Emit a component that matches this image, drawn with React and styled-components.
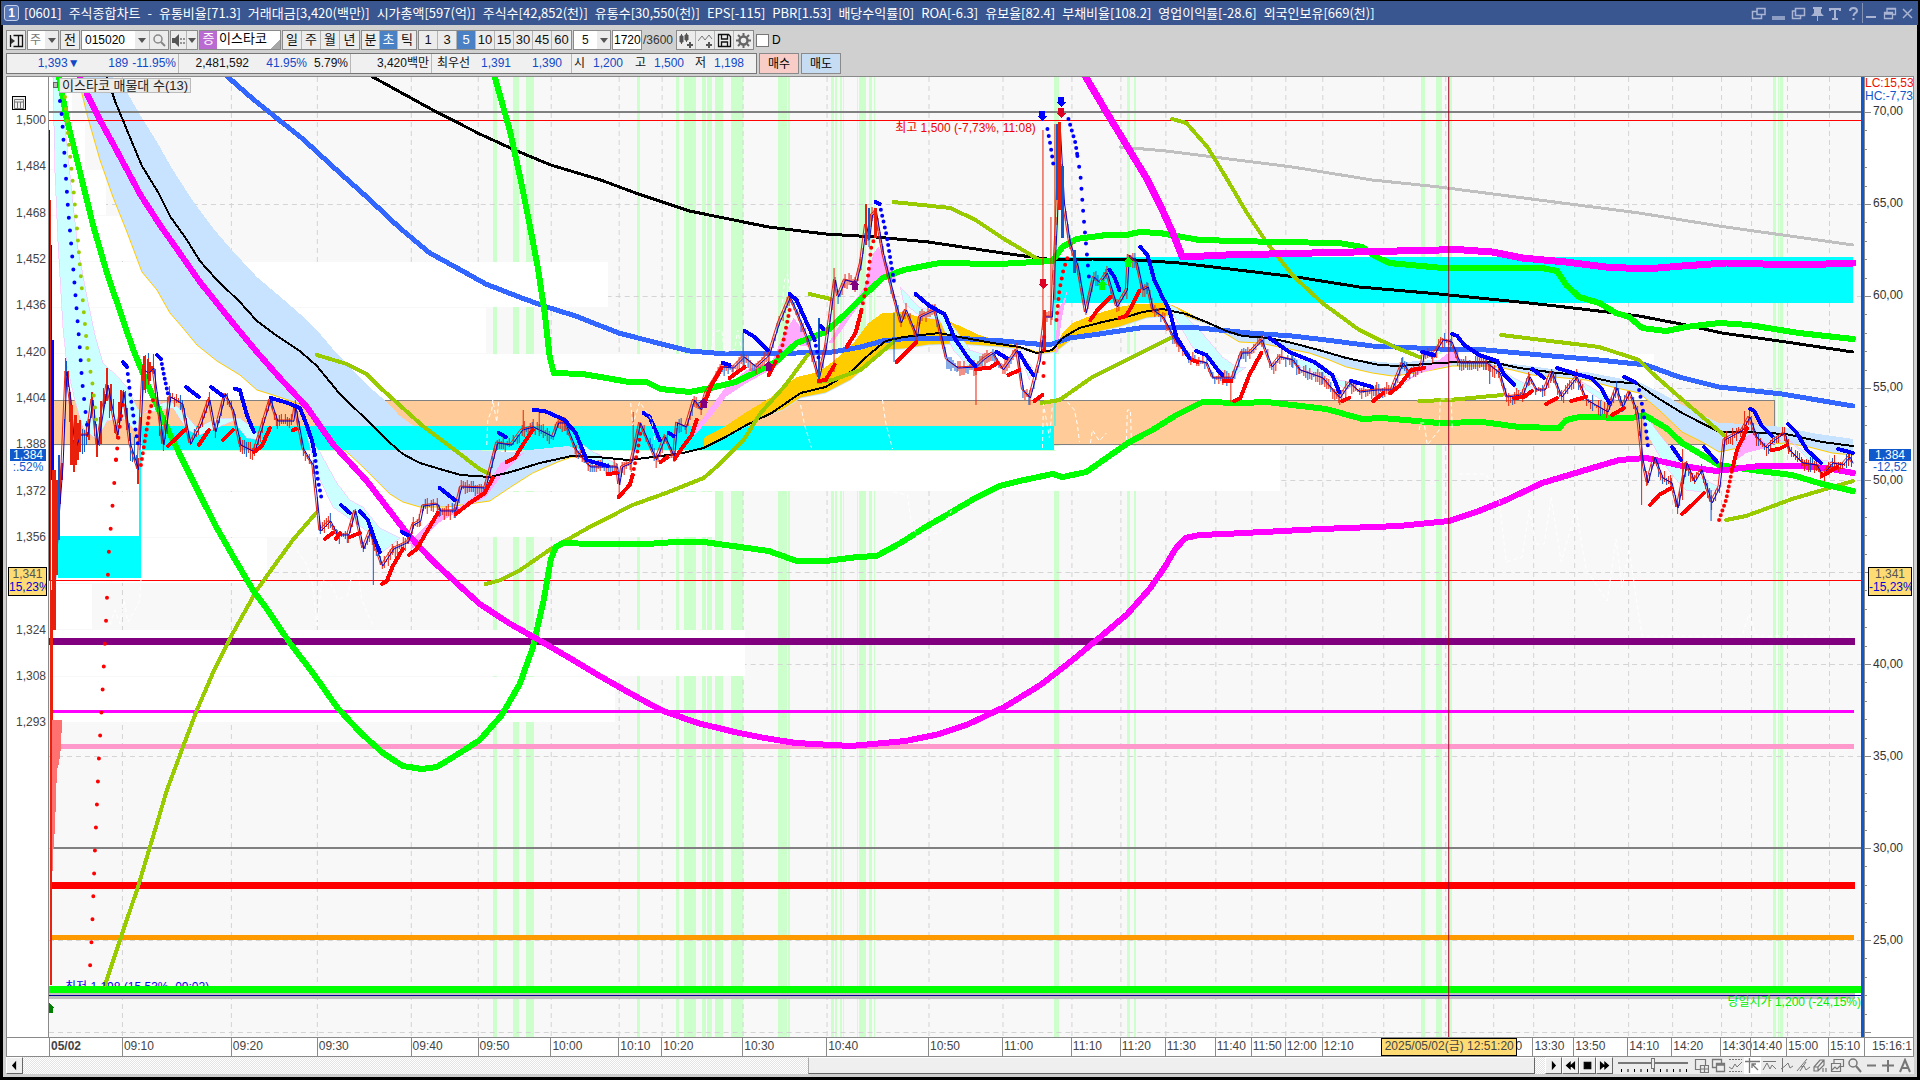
import { useState } from 'react';
import styled, { createGlobalStyle } from 'styled-components';

const GlobalStyle = createGlobalStyle`
  * {
    box-sizing: border-box;
  }
  body {
    margin: 0;
    background: #000;
    font-family: 'Liberation Sans', 'Noto Sans CJK KR', sans-serif;
    font-size: 12px;
    line-height: 16px;
    color: #000;
  }
  button, input, select {
    font: inherit;
    color: inherit;
    margin: 0;
    padding: 0;
    border-radius: 0;
  }
`;

const Frame = styled.div`
  display: flex;
  flex-direction: column;
  min-height: 100vh;
  padding: 1px 2px 3px 1px;
  white-space: nowrap;
`;

const TitleBar = styled.header`
  display: flex;
  align-items: center;
  height: 24px;
  padding: 0 2px 0 3px;
  background: #3a5690;
  color: #fff;
`;

const TitleBadge = styled.span`
  width: 15px;
  height: 16px;
  border: 1px solid #c5d0ea;
  border-radius: 3px;
  background: #5a78b8;
  font-weight: 700;
  line-height: 14px;
  text-align: center;
`;

const Title = styled.h1`
  display: flex;
  flex: 1;
  gap: 7px;
  margin: 0 0 0 5px;
  font-family: 'Noto Sans CJK KR', sans-serif;
  font-size: 13px;
  font-weight: 400;
  line-height: 20px;
`;

const WindowButton = styled.button`
  display: flex;
  align-items: center;
  justify-content: center;
  width: ${(props) => props.$width || 18}px;
  height: 20px;
  border: 0;
  border-left: ${(props) => (props.$divided ? '1px solid #8292b4' : '0')};
  background: none;
  color: #a9b5d3;
`;

const Body = styled.main`
  display: flex;
  flex: 1;
  flex-direction: column;
  margin: 0 1px 0 2px;
  padding: 5px 3px 3px 3px;
  background: #d0d0d0;
`;

const Toolbar = styled.div`
  display: flex;
  height: 20px;
  gap: 1px;
`;

const Group = styled.div`
  display: flex;
  border: 1px solid #8a8a8a;
  background: ${(props) => (props.$white ? '#fff' : '#ececec')};
`;

const ToolButton = styled.button`
  display: flex;
  align-items: center;
  justify-content: center;
  width: ${(props) => props.$width || 19}px;
  border: 0;
  border-right: 1px solid #b4b4b4;
  background: ${(props) => (props.$active ? '#4a80c4' : '#ececec')};
  color: ${(props) => (props.$active ? '#fff' : '#111')};
  font-size: 13px;
  &:last-child {
    border-right: 0;
  }
`;

const ToolInput = styled.input`
  width: ${(props) => props.$width}px;
  border: 0;
  padding-left: ${(props) => props.$indent}px;
  background: #fff;
  outline: none;
`;

const ToolSelect = styled.select`
  width: ${(props) => props.$width}px;
  border: 0;
  padding: 0 0 0 ${(props) => props.$indent || 2}px;
  appearance: none;
  background: #fff;
  color: ${(props) => props.$color || '#111'};
  outline: none;
`;

const MarketBadge = styled.span`
  width: 17px;
  background: #b96bd2;
  color: #fff;
  font-size: 13px;
  text-align: center;
`;

const StockName = styled.span`
  width: 63px;
  padding-left: 2px;
  background: linear-gradient(135deg, #fff 88%, #a8a8a8 88%);
  font-size: 13px;
`;

const CountTotal = styled.span`
  width: 32px;
  line-height: 20px;
  color: #333;
`;

const CheckLabel = styled.label`
  display: flex;
  align-items: center;
  gap: 3px;
  padding-left: 1px;
`;

const CheckBox = styled.input`
  width: 13px;
  height: 13px;
  appearance: none;
  border: 1px solid #777;
  background: #fff;
`;

const QuoteRow = styled.div`
  display: flex;
  gap: 2px;
  height: 21px;
  margin: 3px 0 2px;
`;

const QuoteBox = styled.div`
  display: flex;
  width: 751px;
  border: 1px solid #777;
  background: #f0f0f0;
  line-height: 19px;
`;

const QuoteCell = styled.div`
  display: flex;
  width: ${(props) => props.$width}px;
  padding-right: 2px;
  border-right: 1px solid #b8b8b8;
  &:last-child {
    border-right: 0;
  }
`;

const Quote = styled.span`
  width: ${(props) => props.$width}px;
  color: ${(props) => (props.$blue ? '#1148c8' : '#111')};
  text-align: right;
`;

const OrderButton = styled.button`
  width: 40px;
  border: 1px solid #8a8a8a;
  background: ${(props) => props.$color};
`;

const ChartPanel = styled.section`
  display: flex;
  flex: 1;
  min-height: 600px;
  border: 1px solid #8a8a8a;
  background: #fff;
`;

const PriceAxis = styled.div`
  position: relative;
  display: flex;
  flex-direction: column;
  width: 42px;
  border-right: 1px solid #8a8a8a;
  padding-top: 20px;
  color: #444;
  overflow: hidden;
`;

const PriceList = styled.div`
  display: flex;
  flex-direction: column;
  flex: 0 0 69%;
`;

const PriceLabel = styled.span`
  display: flex;
  flex: 1;
  align-items: center;
  justify-content: flex-end;
  padding-right: 2px;
  line-height: 12px;
`;

const GridButton = styled.button`
  position: absolute;
  left: 5px;
  top: 19px;
  width: 14px;
  height: 14px;
  border: 1px solid #000;
  background: #eee;
`;

const Plot = styled.div`
  position: relative;
  flex: 1;
  min-width: 0;
  border-right: 3px solid #1059cc;
  background: #f8f8f8;
  overflow: hidden;
`;

const PlotSvg = styled.svg`
  position: absolute;
  width: 100%;
  height: 100%;
  shape-rendering: crispEdges;
`;

const Curve = styled.polyline`
  fill: none;
  stroke: ${(props) => props.$color};
  stroke-width: ${(props) => props.$width};
  stroke-linecap: round;
  stroke-linejoin: round;
`;

const Dots = styled(Curve)`
  stroke-dasharray: 0 ${(props) => props.$gap};
  shape-rendering: auto;
`;

const ChartCaption = styled.div`
  position: absolute;
  left: 10px;
  top: 1px;
  padding: 0 2px;
  border: 1px solid #bbb;
  background: #ececec;
  color: #222;
  font-size: 13px;
  line-height: 13px;
`;

const Handle = styled.span`
  position: absolute;
  left: 4px;
  top: 5px;
  width: 5px;
  height: 6px;
  border: 1px solid #666;
  background: #bbb;
`;

const Note = styled.span`
  position: absolute;
  left: ${(props) => props.$left};
  right: ${(props) => props.$right};
  top: ${(props) => props.$top};
  height: ${(props) => props.$height || 'auto'};
  color: ${(props) => props.$color};
  line-height: 16px;
  overflow: hidden;
`;

const RateAxis = styled.div`
  position: relative;
  display: flex;
  flex-direction: column;
  width: 49px;
  border-left: 1px solid #8a8a8a;
  overflow: hidden;
`;

const RateHead = styled.div`
  color: ${(props) => props.$color};
  line-height: 13px;
`;

const RateList = styled.div`
  display: flex;
  flex: 0 0 96%;
  flex-direction: column;
`;

const RateLabel = styled.span`
  flex: 1;
  padding-left: 8px;
  color: #333;
  line-height: 16px;
`;

const RateTicks = styled.svg`
  position: absolute;
  left: 0;
  top: 0;
  width: 7px;
  height: 100%;
  shape-rendering: crispEdges;
`;

const PriceTag = styled.div`
  position: absolute;
  left: ${(props) => props.$left}px;
  right: 2px;
  top: 38.8%;
  color: #1059cc;
  line-height: 12px;
  text-align: center;
  overflow: hidden;
`;

const TagValue = styled.div`
  background: #1059cc;
  color: #fff;
`;

const CursorTag = styled.div`
  position: absolute;
  left: ${(props) => props.$left}px;
  right: 1px;
  top: 51%;
  height: 29px;
  border: 1px solid #000;
  background: #ffdc73;
  color: #555;
  line-height: 13px;
  text-align: center;
  overflow: hidden;
`;

const CursorRate = styled.div`
  color: #0000dd;
`;

const TimeAxis = styled.div`
  position: relative;
  display: flex;
  height: 19px;
  padding-left: 42px;
  border: 1px solid #8a8a8a;
  border-top: 0;
  background: #fff;
  color: #444;
  line-height: 16px;
`;

const TimeCells = styled.div`
  display: flex;
  flex: 1;
`;

const TimeCell = styled.span`
  flex: ${(props) => props.$span} 0 0;
  width: 0;
  box-shadow: inset 1px 0 #8a8a8a;
  font-weight: ${(props) => (props.$bold ? 700 : 400)};
  text-indent: 2px;
`;

const LastTime = styled.span`
  width: 49px;
  padding-left: 7px;
  border-left: 1px solid #8a8a8a;
  overflow: hidden;
`;

const TimeCursor = styled.span`
  position: absolute;
  left: 72.1%;
  top: 0;
  width: 136px;
  height: 18px;
  border: 1px solid #000;
  background: #ffdc73;
  line-height: 15px;
  text-align: center;
`;

const Footer = styled.footer`
  display: flex;
  height: 17px;
  background: #ececec;
`;

const ScrollButton = styled.button`
  width: 17px;
  display: flex;
  align-items: center;
  justify-content: center;
  border: 1px solid;
  border-color: #fff #666 #666 #fff;
  background: #efefef;
`;

const ScrollTrack = styled.div`
  display: flex;
  flex: 1;
  padding-right: 10px;
  background: repeating-conic-gradient(#e4e4e4 0 25%, #fff 0 50%) 0 0 / 2px 2px;
`;

const ScrollSpace = styled.div`
  flex: 787;
`;

const ScrollThumb = styled.div`
  flex: 726;
  border: 1px solid;
  border-color: #fff #666 #666 #aaa;
  background: #efefef;
`;

const SpeedBox = styled.div`
  width: 80px;
  padding: 1px 3px 0 5px;
`;

const SpeedSlider = styled.input`
  display: block;
  width: 70px;
  height: 11px;
  appearance: none;
  background: linear-gradient(#777, #777) 0 4px / 100% 2px no-repeat;
  &::-webkit-slider-thumb {
    appearance: none;
    width: 4px;
    height: 11px;
    border: 1px solid #777;
    background: #eee;
  }
`;

const SpeedTicks = styled.svg`
  display: block;
  width: 70px;
  height: 3px;
`;

const ChartTool = styled.button`
  display: flex;
  align-items: center;
  justify-content: center;
  width: 17px;
  border: 0;
  background: ${(props) => (props.$active ? '#fff' : 'none')};
  color: #777;
`;

const titleItems = [
  '[0601]', '주식종합차트', '-', '유통비율[71.3]', '거래대금[3,420(백만)]', '시가총액[597(억)]',
  '주식수[42,852(천)]', '유통수[30,550(천)]', 'EPS[-115]', 'PBR[1.53]', '배당수익률[0]', 'ROA[-6.3]',
  '유보율[82.4]', '부채비율[108.2]', '영업이익률[-28.6]', '외국인보유[669(천)]',
];

const windowIcons = [
  { name: '분리', d: 'M6 2.500h8v6h-8zM6 5.500H1.500v7h9V9' },
  { name: '아래로', d: 'M1 11h13M1 13h13' },
  { name: '복제', d: 'M4.500 2.500h9v7h-9zM4.500 5H1.500v7.500h8V10' },
];

const periods = ['일', '주', '월', '년'];
const units = ['분', '초', '틱'];
const steps = ['1', '3', '5', '10', '15', '30', '45', '60'];

const prices = [
  '1,500', '1,484', '1,468', '1,452', '1,436', '1,420', '1,404',
  '1,388', '1,372', '1,356', '', '1,324', '1,308', '1,293',
];

const rates = ['70,00', '65,00', '60,00', '55,00', '50,00', '', '40,00', '35,00', '30,00', '25,00'];

const times = [
  [49, '05/02'], [122, '09:10'], [231, '09:20'], [317, '09:30'], [411, '09:40'], [478, '09:50'],
  [551, '10:00'], [619, '10:10'], [662, '10:20'], [743, '10:30'], [827, '10:40'], [929, '10:50'],
  [1003, '11:00'], [1072, '11:10'], [1121, '11:20'], [1166, '11:30'], [1216, '11:40'],
  [1252, '11:50'], [1286, '12:00'], [1323, '12:10'], [1384, ''], [1446, ''], [1494, ''], [1515, '0'],
  [1534, '13:30'], [1575, '13:50'], [1629, '14:10'], [1673, '14:20'], [1722, '14:30'],
  [1752, '14:40'], [1788, '15:00'], [1830, '15:10'],
];

const timeLines = times.filter(([x, label]) => x > 49 && label !== '0');

const rateLines = [204, 296, 388, 480, 572, 664, 756, 848, 940, 1032];

// [x, width]
const strips = [
  [493, 4], [513, 6], [526, 8], [637, 3], [676, 3], [684, 12], [702, 4], [707, 5], [715, 8],
  [731, 12], [778, 9], [788, 2], [831, 3], [835, 2], [840, 2], [843, 1], [857, 1], [859, 7],
  [869, 3], [874, 1], [1055, 5], [1128, 3], [1135, 2], [1422, 4], [1437, 6], [1450, 3],
  [1774, 3], [1779, 1], [1781, 3],
];

// [top, height, right edge] of each price band
const volumeBands = [
  [77, 45, 72], [123, 46, 85], [170, 45, 106], [216, 45, 140], [262, 45, 608], [308, 45, 486],
  [354, 46, 1655], [446, 45, 1281], [492, 45, 715], [538, 45, 267], [584, 45, 92],
  [630, 46, 745], [677, 45, 615],
];

const levels = [
  { y: 112, width: 2, color: '#808080', from: 49, to: 1862 },
  { y: 641.5, width: 7, color: '#800080', from: 49, to: 1856 },
  { y: 711.5, width: 3, color: '#ff00ff', from: 52, to: 1855 },
  { y: 746.5, width: 5, color: '#ff99cc', from: 61, to: 1855 },
  { y: 848, width: 2, color: '#808080', from: 54, to: 1862 },
  { y: 885.5, width: 7, color: '#ff0000', from: 52, to: 1856 },
  { y: 937.5, width: 5, color: '#ff9900', from: 52, to: 1855 },
  { y: 996, width: 6, color: '#c0c0c0', from: 49, to: 1856 },
  { y: 989.5, width: 7, color: '#00ff00', from: 49, to: 1862 },
  { y: 995.5, width: 1, color: '#000090', from: 49, to: 1862 },
];

const blueClouds = [
  {
    top: '113,77 128,94 142,118 157,142 173,170 193,201 213,228 231,249 257,277 283,299 307,320 317,330 333,349 353,370 373,390 387,402 400,416 417,428 433,438 453,445 473,450 511,452 568,446 600,454',
    bottom: '80,77 82,94 88,118 100,160 113,197 127,232 142,272 157,290 170,313 183,328 197,345 217,361 240,375 257,390 273,395 300,404 310,414 320,428 333,442 347,452 362,466 377,481 390,494 403,502 420,507 447,507 490,501 511,487 533,473 558,462 572,457 600,457',
  },
  {
    top: '1220,328 1247,335 1270,337 1293,342 1313,347 1333,353 1360,360 1393,363 1420,361 1450,359 1493,362 1523,365 1553,369 1587,372 1613,377 1640,382 1660,392 1683,405 1700,413 1720,423 1750,424 1783,427 1813,433 1854,439',
    bottom: '1220,330 1240,342 1260,343 1280,347 1310,353 1330,360 1347,367 1373,373 1393,376 1410,374 1433,370 1453,366 1493,366 1513,370 1533,375 1587,380 1613,387 1640,393 1660,410 1683,432 1703,442 1720,452 1753,445 1787,443 1810,447 1833,453 1854,455',
  },
];

const goldClouds = [
  {
    top: '704,438 726,426 747,412 772,397 797,377 819,372 833,362 854,343 869,323 883,313 904,312 919,317 940,317 958,325 980,335 1003,342 1027,348 1043,353 1056,348 1063,333 1073,323 1093,315 1120,307 1137,304 1167,303 1180,308 1200,318 1217,327',
    bottom: '704,448 736,432 761,418 783,410 801,398 826,393 851,380 869,365 886,350 904,349 929,345 958,344 1000,347 1027,350 1043,354 1056,352 1073,339 1093,333 1120,327 1147,318 1167,316 1187,317 1217,327',
  },
];

const paleClouds = [
  '56,77 62,94 67,146 72,194 78,249 87,297 95,335 103,363 117,376 127,387 137,407 142,415 137,432 123,418 107,421 97,440 83,428 75,401 67,366 63,328 58,242 55,173 53,77',
  '143,413 157,405 170,401 183,411 197,428 217,418 240,418 253,428 262,440 247,438 233,421 200,435 187,430 173,408',
  '307,435 320,452 337,483 350,500 363,507 380,528 400,538 383,552 367,531 333,507 317,473',
  '578,440 590,450 605,458 618,464 610,468 590,462',
  '901,287 919,307 940,313 954,327 976,357 986,363 969,367 954,350 940,320 922,317 904,303',
  '960,347 980,353 997,353 983,367 967,360',
  '1020,353 1033,367 1030,380',
  '1167,303 1180,310 1200,330 1223,357 1237,367 1247,367 1233,377 1217,367 1193,347 1173,313',
  '1283,357 1320,363 1340,380 1357,383 1347,390 1330,377 1307,370',
  '1500,367 1513,377 1533,387 1533,393 1517,390',
  '1583,382 1600,392 1617,400 1607,403 1587,390',
  '1642,407 1657,430 1673,450 1683,467 1700,477 1720,487 1710,493 1687,490 1680,483 1667,467 1647,433',
  '1790,440 1807,453 1823,460 1840,463 1827,467 1810,460',
];

const pinkClouds = [
  '410,542 440,511 460,507 480,492 486,488 501,463 526,452 522,455 504,473 486,497 461,510 440,522 413,549',
  '686,443 697,427 711,407 726,387 747,370 772,362 783,337 794,318 801,327 811,347 797,345 776,367 747,383 726,397 711,417 697,433',
  '829,343 851,307 865,287 874,253 879,247 890,267 897,280 883,277 869,293 851,317 833,343',
  '1056,353 1058,310 1063,303 1068,290 1062,320 1058,353',
  '1400,387 1420,370 1440,360 1453,350 1462,360 1443,367 1420,373',
  '1733,463 1743,440 1753,433 1767,443 1783,440 1767,448 1747,453',
];

const longCurves = [
  {
    color: '#c0c0c0',
    width: 3,
    points: '1121,147 1167,151 1293,167 1373,180 1440,187 1540,200 1640,213 1720,226 1854,245',
  },
  {
    color: '#3366ff',
    width: 5,
    points: '228,77 253,99 283,123 303,139 340,173 367,197 400,228 430,253 461,270 486,284 522,298 547,307 576,316 619,333 654,342 690,351 726,354 797,353 833,352 861,347 883,341 911,338 954,338 1003,341 1037,344 1053,344 1070,338 1100,334 1140,328 1167,327 1200,328 1250,333 1293,336 1327,340 1373,346 1440,349 1487,350 1553,356 1600,360 1647,365 1680,377 1720,387 1783,394 1854,406',
  },
  {
    color: '#000',
    width: 3,
    points: '373,77 433,110 480,134 515,150 551,165 601,180 636,193 690,211 744,222 769,227 826,234 876,237 929,242 1003,253 1047,259 1093,259 1137,260 1180,263 1247,271 1297,277 1360,287 1440,294 1530,303 1583,309 1640,316 1687,325 1723,333 1787,342 1854,352',
  },
  {
    color: '#000',
    width: 2,
    points: '107,77 115,101 127,130 142,166 158,192 170,216 187,240 200,261 217,280 240,302 257,321 273,333 300,351 317,366 340,394 367,420 387,440 403,454 420,463 440,469 461,475 490,477 511,472 540,463 572,456 597,457 629,460 654,457 683,453 704,448 726,437 747,425 772,413 801,393 826,387 851,372 869,355 886,341 904,337 940,333 960,337 993,343 1020,347 1037,353 1053,350 1063,338 1080,328 1103,322 1127,317 1143,312 1163,309 1187,314 1207,322 1227,331 1243,336 1270,338 1293,343 1323,351 1347,358 1380,365 1400,366 1440,363 1460,362 1493,362 1520,368 1550,372 1587,376 1613,382 1637,383 1657,397 1683,413 1720,432 1747,432 1787,434 1823,442 1854,446',
  },
  { color: '#99cc00', width: 4, points: '317,355 347,364 367,374 383,390 423,426 480,469 488,473' },
  {
    color: '#99cc00',
    width: 4,
    points: '105,985 120,940 137,890 150,847 167,790 183,747 197,710 213,673 233,633 257,590 277,562 293,540 317,512',
  },
  {
    color: '#99cc00',
    width: 4,
    points: '486,584 501,580 519,571 551,549 590,527 633,505 669,492 704,478 719,465 744,440 761,413 786,385 808,355',
  },
  { color: '#99cc00', width: 4, points: '810,294 831,299' },
  { color: '#99cc00', width: 4, points: '819,382 833,380 861,370 894,342' },
  { color: '#99cc00', width: 4, points: '894,202 951,208 976,220 1003,238 1040,260 1052,260' },
  { color: '#99cc00', width: 4, points: '1042,403 1060,400 1093,377 1127,360 1175,336' },
  {
    color: '#99cc00',
    width: 4,
    points: '1173,119 1187,123 1208,147 1227,178 1247,212 1267,242 1293,275 1323,303 1360,330 1393,346 1420,357',
  },
  { color: '#99cc00', width: 4, points: '1420,401 1450,400 1503,395' },
  { color: '#99cc00', width: 4, points: '1502,335 1600,347 1640,360 1653,373 1687,403 1727,437' },
  { color: '#99cc00', width: 4, points: '1727,520 1747,516 1793,499 1854,481' },
  {
    color: '#00ff00',
    width: 6,
    points: '59,77 67,120 82,180 93,225 107,273 120,311 133,349 147,383 167,428 187,469 200,495 217,528 233,556 253,590 267,609 290,643 313,673 337,707 360,732 383,753 403,766 422,769 437,767 460,753 480,740 502,715 520,684 533,648 544,600 551,560 556,547 563,543 594,544 647,544 676,542 704,542 726,545 769,551 797,561 826,561 858,557 877,556 901,543 926,527 947,515 976,498 1000,486 1020,481 1053,474 1063,477 1087,472 1107,458 1130,442 1153,430 1177,415 1203,402 1243,403 1267,402 1293,405 1327,409 1363,419 1383,418 1440,423 1483,422 1520,427 1560,428 1567,420 1580,417 1633,418 1645,415 1667,428 1683,443 1703,455 1720,465 1760,471 1793,475 1823,484 1854,491',
  },
  {
    color: '#00ff00',
    width: 6,
    points: '495,77 510,130 521,180 529,220 538,267 545,313 550,357 554,373 583,374 601,377 629,382 647,382 661,389 690,392 711,388 736,382 761,370 776,362 797,343 826,332 847,313 865,295 883,278 904,270 940,263 1000,264 1053,261 1063,247 1077,239 1107,235 1127,235 1140,232 1160,233 1200,240 1277,242 1340,243 1363,247 1377,257 1390,263 1443,268 1543,268 1558,271 1567,285 1580,297 1600,303 1617,313 1630,317 1643,328 1667,331 1687,327 1720,323 1750,325 1800,333 1854,339',
  },
  {
    color: '#ff00ff',
    width: 6,
    points: '80,77 87,94 100,120 117,151 140,194 160,225 177,249 200,282 233,323 257,352 280,378 307,407 333,444 367,481 407,533 433,561 460,586 480,604 509,623 539,640 570,658 600,676 630,693 661,710 698,723 735,732 765,738 796,743 851,746 906,741 940,734 967,725 1005,707 1041,685 1072,661 1102,636 1128,614 1151,588 1166,566 1176,549 1186,538 1200,535 1225,534 1322,529 1400,526 1450,521 1477,512 1507,500 1543,483 1583,471 1620,460 1647,458 1683,466 1717,471 1760,466 1800,466 1827,468 1854,473',
  },
  {
    color: '#ff00ff',
    width: 7,
    points: '1084,73 1107,112 1127,145 1147,178 1163,210 1173,232 1183,257 1227,255 1313,253 1440,250 1450,249 1493,252 1523,258 1567,262 1607,267 1647,269 1683,266 1727,263 1800,265 1854,263',
  },
];

const blueTrails = [
  '123,362 127,367', '157,355 161,359', '186,387 199,397', '211,387 223,396', '235,389 240,390 247,415 254,432',
  '271,398 288,403 300,408 305,420 312,440 315,455', '341,505 350,513',
  '360,511 368,520 375,540 380,552', '402,532 408,535', '440,488 455,500', '499,433 506,437',
  '534,410 545,411 565,420 576,433 587,460', '590,461 608,466', '644,413 650,417 660,440',
  '669,433 674,436', '723,363 730,365', '745,331 755,337 768,350', '790,294 797,300 805,318 815,340',
  '821,326 824,329', '876,202 880,204', '916,294 930,306 945,314 955,338 970,360 976,366', '997,352 1007,358',
  '1020,353 1027,365 1034,375', '1110,270 1115,277 1120,290',
  '1141,247 1148,255 1155,280 1163,297 1170,310 1177,337 1190,358',
  '1197,351 1207,355 1220,372 1223,375', '1270,338 1290,352 1315,362 1333,375 1340,392',
  '1352,381 1373,387', '1423,352 1435,355', '1453,334 1458,336 1465,345 1480,355 1498,361 1505,375 1515,385',
  '1533,369 1545,378', '1558,368 1577,374 1592,378 1602,388 1610,403', '1625,377 1637,383',
  '1673,447 1682,460', '1705,447 1718,462', '1751,409 1755,411 1762,425 1773,436',
  '1789,424 1797,432 1808,450 1822,463', '1839,449 1854,453',
];

const redTrails = [
  '168,446 186,429', '199,445 209,430', '223,440 233,430', '254,452 262,446 270,428', '293,430 296,429',
  '325,539 333,533', '336,539 340,533', '350,537 360,533', '382,584 387,581 393,566 403,549',
  '409,555 417,549 428,530 438,513', '456,514 470,503 485,493 493,478', '507,462 515,458 523,445 533,430',
  '608,474 617,473', '619,497 630,485 633,475', '661,462 668,457', '675,459 683,447 692,435 697,420',
  '704,405 712,385 722,368', '730,378 745,367', '769,375 776,362', '819,381 826,380 835,365', '847,347 856,333 862,310',
  '897,362 905,354 917,342', '976,369 990,368 998,363', '1009,375 1020,370', '1035,401 1043,395',
  '1091,320 1098,310 1111,297', '1120,318 1127,316 1140,291', '1193,360 1198,362', '1224,381 1232,381',
  '1235,401 1241,398 1250,375 1262,353', '1343,401 1350,398', '1374,401 1384,393',
  '1391,393 1400,386 1412,370 1425,368', '1515,398 1525,397 1533,391', '1547,404 1558,398',
  '1572,401 1587,397', '1613,415 1625,408', '1651,505 1660,495 1672,488', '1683,514 1695,503 1705,493',
  '1733,470 1738,450 1745,435 1748,428', '1772,450 1780,449 1788,445', '1823,476 1830,472 1838,467',
];

const dotTrails = [
  { color: '#0000ff', gap: 13, points: '60,101 62,117 65,163 68,208 71,242 74,277 77,314 80,350 82,380 87,425' },
  { color: '#99cc00', gap: 12, points: '65,97 68,135 73,184 77,228 80,266 84,314 88,356 93,387 97,428' },
  { color: '#0000ff', gap: 7, points: '127,367 130,392 134,420 139,450' },
  { color: '#ff0000', gap: 11, points: '123,405 119,432 116,460' },
  { color: '#ff0000', gap: 23, points: '116,460 113,500 109,550 106,622 103,683 99,757 95,849 92,933 89,985' },
  { color: '#ff0000', gap: 6, points: '141,465 145,440 150,410 154,397' },
  { color: '#0000ff', gap: 5, points: '161,359 164,375 168,394' },
  { color: '#0000ff', gap: 6, points: '315,455 318,480 322,500' },
  { color: '#ff0000', gap: 6, points: '633,475 638,450 641,432' },
  { color: '#ff0000', gap: 6, points: '776,362 783,345 790,310' },
  { color: '#0000ff', gap: 6, points: '815,340 819,358' },
  { color: '#ff0000', gap: 7, points: '862,310 868,280 872,245 876,237' },
  { color: '#0000ff', gap: 6, points: '880,204 887,235 895,285' },
  { color: '#0000ff', gap: 7, points: '1048,129 1051,145 1054,165' },
  { color: '#ff0000', gap: 13, points: '1044,376 1045,325' },
  { color: '#ff0000', gap: 7, points: '1057,320 1060,290 1064,270 1068,258' },
  { color: '#0000ff', gap: 6, points: '1069,119 1076,143 1078,156' },
  { color: '#0000ff', gap: 11, points: '1078,156 1081,175 1084,215 1088,260 1090,283' },
  { color: '#0000ff', gap: 7, points: '1640,390 1643,405 1647,430 1649,448' },
  { color: '#ff0000', gap: 5, points: '1720,520 1727,500 1733,470' },
];

const whiteTraces = [
  '297,550 307,565 313,585 317,625 322,580 332,585 338,600 348,595 353,570 358,572 362,600 367,612 373,625',
  '110,625 115,610 120,624 124,600 128,622 135,610 140,600 141,580',
  '487,445 488,420 492,410 493,400 497,422 499,400', '631,403 633,425 640,402 652,420 655,440',
  '712,350 714,332 722,330 725,352 735,350 738,330 742,350', '782,310 785,280 788,274 790,290',
  '801,405 805,425 812,448', '883,400 886,422 893,449', '894,492 908,495 912,525 920,540 930,535 940,532 948,520 952,510',
  '1043,448 1044,404 1050,438 1053,405', '1068,402 1075,410 1078,425 1080,442', '1091,443 1093,430 1100,441 1107,433',
  '1127,440 1128,410 1131,410 1132,440', '1420,430 1421,423 1425,423 1428,445 1440,430 1441,399 1452,399 1453,430',
];

const pricePath = [
  [54, 590], [58, 518], [62, 466], [66, 372], [70, 400], [74, 450], [80, 435], [87, 435], [92, 400],
  [97, 445], [107, 385], [117, 435], [123, 392], [130, 445], [138, 470], [143, 370], [148, 373],
  [153, 368], [163, 445], [170, 397], [182, 404], [190, 444], [200, 425], [209, 400], [215, 432],
  [225, 394], [233, 411], [240, 445], [254, 452], [270, 400], [277, 421], [293, 421], [295, 407],
  [303, 449], [313, 466], [320, 531], [330, 521], [337, 535], [348, 535], [355, 511], [363, 549],
  [370, 531], [382, 566], [393, 549], [408, 542], [413, 525], [420, 521], [423, 506], [437, 504],
  [440, 511], [455, 511], [461, 487], [485, 488], [490, 470], [497, 443], [511, 445], [522, 430],
  [533, 427], [553, 437], [558, 423], [565, 423], [576, 450], [590, 467], [617, 467], [619, 485],
  [622, 467], [631, 463], [640, 423], [656, 460], [665, 437], [674, 457], [677, 423], [686, 427],
  [694, 400], [701, 410], [706, 393], [722, 367], [733, 368], [744, 357], [756, 367], [769, 355],
  [779, 323], [790, 297], [797, 313], [808, 340], [819, 378], [826, 347], [835, 280], [838, 297],
  [845, 280], [856, 283], [861, 263], [866, 225], [869, 240], [872, 215], [876, 212], [883, 253],
  [894, 297], [901, 323], [906, 310], [917, 337], [920, 317], [935, 310], [947, 360], [958, 368],
  [976, 367], [983, 360], [993, 353], [1003, 370], [1017, 350], [1023, 390], [1030, 398], [1040, 360],
  [1045, 317], [1052, 317], [1057, 220], [1060, 130], [1064, 203], [1070, 243], [1078, 267],
  [1086, 313], [1094, 277], [1100, 283], [1107, 273], [1117, 307], [1127, 290], [1129, 255],
  [1137, 263], [1143, 290], [1148, 287], [1153, 310], [1163, 317], [1177, 343], [1193, 360],
  [1207, 363], [1213, 378], [1233, 378], [1242, 353], [1250, 353], [1262, 340], [1272, 367],
  [1280, 357], [1293, 360], [1300, 370], [1323, 378], [1340, 398], [1350, 383], [1360, 392],
  [1377, 390], [1392, 390], [1403, 363], [1410, 373], [1422, 367], [1424, 354], [1433, 357],
  [1443, 340], [1452, 342], [1460, 363], [1487, 363], [1500, 373], [1507, 397], [1523, 395],
  [1530, 377], [1537, 390], [1545, 390], [1552, 372], [1562, 397], [1577, 377], [1587, 400],
  [1608, 412], [1617, 388], [1623, 407], [1630, 392], [1638, 413], [1643, 460], [1648, 483],
  [1655, 457], [1663, 478], [1672, 483], [1678, 508], [1687, 463], [1695, 482], [1702, 470],
  [1712, 503], [1720, 487], [1725, 440], [1743, 430], [1750, 417], [1757, 437], [1767, 448],
  [1775, 440], [1785, 433], [1790, 450], [1803, 463], [1817, 465], [1823, 475], [1833, 463],
  [1843, 465], [1850, 457], [1853, 463],
];

// [x, top, bottom, color, width]
const spikes = [
  [49.5, 130, 580, '#0000ff', 1], [51, 245, 480, '#0000ff', 2], [50.5, 200, 300, '#e8200c', 1],
  [53, 340, 480, '#0000ff', 2], [50.5, 300, 985, '#e8200c', 1], [54, 470, 630, '#e8200c', 4],
  [51.5, 630, 985, '#e8200c', 1], [52.5, 590, 720, '#e8200c', 2], [59, 455, 540, '#1059cc', 2], [57, 480, 575, '#e8200c', 2],
  [65.5, 358, 400, '#e8200c', 1], [72, 405, 465, '#e8200c', 3], [76, 415, 465, '#e8200c', 3],
  [80, 420, 452, '#e8200c', 2], [144.5, 356, 390, '#e8200c', 2], [148.5, 358, 385, '#e8200c', 1],
  [140.5, 450, 578, '#00ffff', 2], [373.5, 540, 585, '#1059cc', 1], [523.5, 410, 430, '#e8200c', 1],
  [539.5, 410, 432, '#e8200c', 1], [633.5, 412, 460, '#e8200c', 1], [743.5, 333, 362, '#1059cc', 1],
  [834.5, 268, 372, '#e8200c', 1], [819.5, 318, 381, '#1059cc', 2], [866, 204, 245, '#e8200c', 2],
  [869, 208, 240, '#1059cc', 2], [876, 208, 238, '#e8200c', 3], [894.5, 313, 362, '#1059cc', 1],
  [976.5, 365, 405, '#e8200c', 1], [1043.5, 130, 330, '#e8200c', 1], [1045.5, 310, 350, '#e8200c', 3],
  [1051.5, 217, 317, '#e8200c', 1], [1055.5, 124, 300, '#e8200c', 1], [1058, 124, 200, '#1059cc', 2],
  [1060.5, 122, 210, '#e8200c', 3], [1063.5, 166, 238, '#1059cc', 3], [1075, 250, 273, '#1059cc', 3],
  [1231.5, 380, 402, '#e8200c', 1], [1642.5, 410, 505, '#e8200c', 1], [1712, 490, 521, '#1059cc', 1],
  [1683.5, 449, 500, '#e8200c', 1], [1745.5, 411, 440, '#e8200c', 1], [1490.5, 362, 384, '#1059cc', 1],
];

const arrows = [
  { x: 1043, y: 116, color: '#0000ff' },
  { x: 1062, y: 102, color: '#0000ff' },
  { x: 1062, y: 113, color: '#dd0022' },
  { x: 1044, y: 284, color: '#dd0022' },
  { x: 1103, y: 285, color: '#00ff00', up: true },
  { x: 1129, y: 262, color: '#00ff00', up: true },
  { x: 704, y: 403, color: '#800080', up: true },
  { x: 769, y: 366, color: '#800080', up: true },
  { x: 855, y: 285, color: '#800080', up: true },
  { x: 50, y: 1008, color: '#008000', up: true },
];

const makeTicks = () => {
  const result = [];
  let seed = 17;
  const random = () => {
    seed = (seed * 16807) % 2147483647;
    return seed / 2147483647;
  };
  for (let i = 1; i < pricePath.length; i++) {
    const [x0, y0] = pricePath[i - 1];
    const [x1, y1] = pricePath[i];
    for (let x = x0; x < x1; x += 2) {
      const y = y0 + ((y1 - y0) * (x - x0)) / (x1 - x0);
      const range = x < 170 ? 22 : 8;
      const up = Math.round(random() * range);
      const down = Math.round(random() * range);
      const rising = y1 < y0 ? random() > 0.15 : random() > 0.45;
      const width = x < 155 && rising ? 2 : 1;
      result.push({ x: x + 0.5, top: Math.round(y) - up, bottom: Math.round(y) + down + 1, rising, width });
    }
  }
  return result;
};

const ticks = makeTicks();

const shiftPath = (dx, dy) => pricePath.map(([x, y]) => `${x + dx},${y + dy}`).join(' ');

const whiteEcho = pricePath
  .filter(([x]) => x > 1455)
  .map(([x, y]) => `${x},${Math.min(636, Math.max(470, Math.round(y * 2.6 - 470)))}`)
  .join(' ');

const reverse = (points) => points.split(' ').reverse().join(' ');

const Cloud = ({ cloud, fill, edge }) => (
  <>
    <polygon points={`${cloud.top} ${reverse(cloud.bottom)}`} fill={fill} />
    <Curve points={cloud.bottom} $color={edge} $width={1} />
  </>
);

const Arrow = ({ x, y, color, up }) => (
  <path
    d={up ? 'M0-5l5 5h-2v5h-6v-5h-2z' : 'M0 5l5-5h-2v-5h-6v5h-2z'}
    transform={`translate(${x} ${y})`}
    fill={color}
  />
);

const Chart = () => (
  <PlotSvg viewBox="49 77 1813 960" preserveAspectRatio="none" role="img" aria-label="이스타코 초봉 차트">
    {strips.map(([x, width]) => (
      <rect key={x} x={x} y="77" width={width} height="960" fill="#ccffcc" />
    ))}
    <g stroke="#d4d4d4" strokeDasharray="5 4">
      {timeLines.map(([x]) => (
        <line key={x} x1={x + 0.5} x2={x + 0.5} y1="77" y2="1037" />
      ))}
      {rateLines.map((y) => (
        <line key={y} x1="49" x2="1862" y1={y + 0.5} y2={y + 0.5} />
      ))}
    </g>
    {volumeBands.map(([y, height, right]) => (
      <rect key={y} x="49" y={y} width={right - 49} height={height} fill="#fff" />
    ))}
    <rect x="48.5" y="400.5" width="1727" height="44" fill="#ffcc99" stroke="#808080" />
    <path d="M58 536h82v42h-82zM142 426h913v24H142zM1055 257h799v46h-799z" fill="#00ffff" />
    <path d="M1055.500 303v123" stroke="#00ffff" />
    <path d="M142 450.500h914" stroke="#ccffcc" />

    {blueClouds.map((cloud) => (
      <Cloud key={cloud.top} cloud={cloud} fill="#c8e3ff" edge="#ffcc00" />
    ))}
    <rect x="142" y="426" width="330" height="24" fill="#00ffff" />
    {goldClouds.map((cloud) => (
      <Cloud key={cloud.top} cloud={cloud} fill="#ffcc00" edge="#c8e3ff" />
    ))}
    {paleClouds.map((points) => (
      <polygon key={points} points={points} fill="#ccffff" stroke="#ffaaff" strokeWidth="0.5" />
    ))}
    {pinkClouds.map((points) => (
      <polygon key={points} points={points} fill="#ffaaff" />
    ))}
    <polygon points="51,720 62,720 61,747 59,763 57,770 55,827 53,857 52,887 51,953" fill="#ff7070" />

    {levels.map(({ y, width, color, from, to }) => (
      <line key={y} x1={from} x2={to} y1={y} y2={y} stroke={color} strokeWidth={width} />
    ))}
    <path d="M49 120.500h1813M49 580.500h1813" stroke="#ff0000" />

    {longCurves.map(({ points, color, width }) => (
      <Curve key={points} points={points} $color={color} $width={width} />
    ))}

    {ticks.map(({ x, top, bottom, rising, width }, i) => (
      <line key={i} x1={x} x2={x} y1={top} y2={bottom} stroke={rising ? '#e8200c' : '#1059cc'} strokeWidth={width} />
    ))}
    <Curve points={shiftPath(-1, -1)} $color="#e8200c" $width={1} />
    <Curve points={shiftPath(1, 0)} $color="#0000cc" $width={1} />
    {spikes.map(([x, top, bottom, color, width]) => (
      <line key={`${x}-${top}`} x1={x} x2={x} y1={top} y2={bottom} stroke={color} strokeWidth={width} />
    ))}
    {redTrails.map((points) => (
      <Curve key={points} points={points} $color="#ff0000" $width={4} />
    ))}
    {blueTrails.map((points) => (
      <Curve key={points} points={points} $color="#0000ff" $width={4} />
    ))}
    {dotTrails.map(({ points, color, gap }) => (
      <Dots key={points} points={points} $color={color} $width={4} $gap={gap} />
    ))}
    <g fill="none" stroke="#fff" strokeDasharray="4 3">
      {whiteTraces.map((points) => (
        <polyline key={points} points={points} />
      ))}
      <polyline points={whiteEcho} />
    </g>
    {arrows.map((arrow) => (
      <Arrow key={`${arrow.x}-${arrow.y}`} {...arrow} />
    ))}
    <path d="M1449.500 77v960" stroke="#a00024" />
  </PlotSvg>
);

const Icon = ({ d, size = 15, children, fill = 'none', width = 1.5 }) => (
  <svg width={size} height={size} viewBox="0 0 15 15" fill={fill} stroke="currentColor" strokeWidth={width}>
    {d && <path d={d} />}
    {children}
  </svg>
);

const Caret = () => (
  <svg width="8" height="5" viewBox="0 0 8 5">
    <path d="M0 0h8L4 5z" fill="#555" />
  </svg>
);

const ToolbarRow = () => {
  const [period, setPeriod] = useState('초');
  const [step, setStep] = useState('5');
  const [code, setCode] = useState('015020');
  const [count, setCount] = useState('1720');

  return (
    <Toolbar>
      <Group>
        <ToolButton $width={18} aria-label="패널">
          <Icon width={1.3}>
            <path d="M4.500 2.500h9v11h-9M9.500 3v10M1.500 2v12" />
            <path d="M2 5l4 3-4 3z" fill="#333" stroke="none" />
          </Icon>
        </ToolButton>
      </Group>
      <Group>
        <ToolSelect $width={17} $color="#777" aria-label="종류" defaultValue="주">
          <option>주</option>
        </ToolSelect>
        <ToolButton $width={13} aria-label="종류 목록"><Caret /></ToolButton>
      </Group>
      <Group>
        <ToolButton $width={18}>전</ToolButton>
      </Group>
      <Group>
        <ToolInput $width={53} $indent={3} aria-label="종목코드" value={code} onChange={(e) => setCode(e.target.value)} />
        <ToolButton $width={15} aria-label="종목 목록"><Caret /></ToolButton>
        <ToolButton $width={18} aria-label="종목 검색">
          <Icon><circle cx="6" cy="6" r="4" stroke="#888" /><path d="M9 9l4 4" stroke="#888" strokeWidth="2" /></Icon>
        </ToolButton>
      </Group>
      <Group>
        <ToolButton $width={16} aria-label="소리">
          <Icon>
            <path d="M1 5h3l4-4v13l-4-4H1z" fill="#555" stroke="none" />
            <path d="M10 5v6M13 5v6" strokeDasharray="2 2" stroke="#777" />
          </Icon>
        </ToolButton>
        <ToolButton $width={10} aria-label="소리 목록"><Caret /></ToolButton>
      </Group>
      <Group $white>
        <MarketBadge>증</MarketBadge>
        <StockName>이스타코</StockName>
      </Group>
      <Group>
        {periods.map((name) => (
          <ToolButton key={name} $active={period === name} onClick={() => setPeriod(name)}>{name}</ToolButton>
        ))}
      </Group>
      <Group>
        {units.map((name) => (
          <ToolButton key={name} $width={18} $active={period === name} onClick={() => setPeriod(name)}>{name}</ToolButton>
        ))}
      </Group>
      <Group>
        {steps.map((name) => (
          <ToolButton key={name} $active={step === name} onClick={() => setStep(name)}>{name}</ToolButton>
        ))}
      </Group>
      <Group>
        <ToolSelect $width={23} $indent={8} aria-label="주기" defaultValue="5">
          <option>5</option>
        </ToolSelect>
        <ToolButton $width={13} aria-label="주기 목록"><Caret /></ToolButton>
      </Group>
      <Group>
        <ToolInput $width={28} $indent={1} aria-label="봉 개수" value={count} onChange={(e) => setCount(e.target.value)} />
      </Group>
      <CountTotal>/3600</CountTotal>
      <Group>
        <ToolButton aria-label="봉 추가">
          <Icon>
            <path d="M1 3h3v6H1zM6 2h3v5H6zM2.500 1v10M7.500 0v9" fill="#555" stroke="#555" strokeWidth="1" />
            <path d="M11 9v6M8 12h6" stroke="#555" strokeWidth="2" />
          </Icon>
        </ToolButton>
        <ToolButton aria-label="지표 추가">
          <Icon>
            <path d="M0 8l4-5 3 4 4-5 3 4" stroke="#777" strokeWidth="1" />
            <path d="M11 9v6M8 12h6" stroke="#555" strokeWidth="2" />
          </Icon>
        </ToolButton>
        <ToolButton aria-label="저장">
          <Icon d="M1.500 1.500h10l2 2v10h-12zM4.500 2v4h6V2M4.500 13V9h6v4" width={1.3} />
        </ToolButton>
        <ToolButton aria-label="설정">
          <Icon>
            <circle cx="7.500" cy="7.500" r="4" stroke="#666" strokeWidth="2.500" />
            <path
              d="M7.500 0v3M7.500 12v3M0 7.500h3M12 7.500h3M2 2l2 2M11 11l2 2M2 13l2-2M11 4l2-2"
              stroke="#666"
              strokeWidth="2"
            />
          </Icon>
        </ToolButton>
      </Group>
      <CheckLabel>
        <CheckBox type="checkbox" />D
      </CheckLabel>
    </Toolbar>
  );
};

const Quotes = () => (
  <QuoteRow>
    <QuoteBox>
      <QuoteCell $width={172}>
        <Quote $width={73} $blue>1,393▼</Quote>
        <Quote $width={49} $blue>189</Quote>
        <Quote $width={48} $blue>-11.95%</Quote>
      </QuoteCell>
      <QuoteCell $width={172}>
        <Quote $width={70}>2,481,592</Quote>
        <Quote $width={58} $blue>41.95%</Quote>
        <Quote $width={41}>5.79%</Quote>
      </QuoteCell>
      <QuoteCell $width={81}>
        <Quote $width={78}>3,420백만</Quote>
      </QuoteCell>
      <QuoteCell $width={140}>
        <Quote $width={38}>최우선</Quote>
        <Quote $width={41} $blue>1,391</Quote>
        <Quote $width={51} $blue>1,390</Quote>
      </QuoteCell>
      <QuoteCell $width={184}>
        <Quote $width={13}>시</Quote>
        <Quote $width={38} $blue>1,200</Quote>
        <Quote $width={23}>고</Quote>
        <Quote $width={38} $blue>1,500</Quote>
        <Quote $width={22}>저</Quote>
        <Quote $width={38} $blue>1,198</Quote>
      </QuoteCell>
    </QuoteBox>
    <OrderButton $color="#f8cdc8">매수</OrderButton>
    <OrderButton $color="#c5dcf3">매도</OrderButton>
  </QuoteRow>
);

const ChartTools = () => (
  <>
    <ChartTool aria-label="새 차트">
      <Icon width={1.2} d="M7 11.500H1.500v-10h10V7M6.500 7.500h8v7h-8zM10.500 7v7M7 11h7" />
    </ChartTool>
    <ChartTool aria-label="겹치기">
      <Icon width={1.3} d="M5 9.500H1.500v-8h9V5M5.500 5.500h8v8h-8zM5 7h9" />
    </ChartTool>
    <ChartTool aria-label="영역">
      <Icon width={1}>
        <path d="M1 1.500h13M1 13.500h13" strokeDasharray="2 1" />
        <path d="M1 9l3 2 3-5 2 3 5-5" />
      </Icon>
    </ChartTool>
    <ChartTool $active aria-label="십자선"><Icon width={1.3} d="M0 3.500h15M4.500 0v15M7 6l6 6M7 10V6h4" /></ChartTool>
    <ChartTool aria-label="수평선"><Icon width={1} d="M1 3.500h13M1 12l4-7 3 6 2-4 4 4" /></ChartTool>
    <ChartTool aria-label="수직선"><Icon width={1} d="M3.500 0v14M2 11l4-3 3-3 2 5 3-2" /></ChartTool>
    <ChartTool aria-label="추세선"><Icon width={1} d="M1 13L11 1M4 13l6-9M5 9l3-1 2 4 4-3" /></ChartTool>
    <ChartTool aria-label="지우개"><Icon width={1.2} d="M1 9l6-7h4v5l-6 6H1zM1 9h4l6-7M5 9v4M10 10v4M13 10v4" /></ChartTool>
    <ChartTool aria-label="차트 목록"><Icon width={1.2} d="M4 5V1.500h9.500v7H11M1.500 5.500h9v8h-9zM2 12l3-3 2 2 3-3" /></ChartTool>
    <ChartTool aria-label="확대경"><Icon><circle cx="6" cy="5" r="4" /><path d="M9 8l5 6" strokeWidth="2" /></Icon></ChartTool>
    <ChartTool aria-label="축소"><Icon width={2} d="M3 7.500h9" /></ChartTool>
    <ChartTool aria-label="확대"><Icon width={2} d="M1 7.500h12M7 2v12" /></ChartTool>
    <ChartTool aria-label="글자"><Icon width={2} d="M2 14L7 2l5 12M4 10h6" /></ChartTool>
  </>
);

const App = () => {
  const [speed, setSpeed] = useState(5);

  return (
    <>
      <GlobalStyle />
      <Frame>
        <TitleBar>
          <TitleBadge>1</TitleBadge>
          <Title>
            {titleItems.map((item) => (
              <span key={item}>{item}</span>
            ))}
          </Title>
          {windowIcons.map(({ name, d }) => (
            <WindowButton key={name} $width={20} aria-label={name}><Icon d={d} /></WindowButton>
          ))}
          <WindowButton aria-label="고정">
            <Icon><path d="M3 1h9v2h-1v4l3 3H1l3-3V3H3zM7 10h1v5H7z" fill="currentColor" stroke="none" /></Icon>
          </WindowButton>
          <WindowButton aria-label="글꼴"><Icon width={2} d="M2 5V3h10v2M7 3v10M4 13h6" /></WindowButton>
          <WindowButton aria-label="도움말"><Icon width={2} d="M4 5c0-4 7-4 7 0 0 2-3.500 2-3.500 5M7.500 12v2" /></WindowButton>
          <WindowButton $divided aria-label="최소화"><Icon width={2} d="M2 11h10" /></WindowButton>
          <WindowButton aria-label="이전 크기로">
            <Icon width={1.3} d="M5 6V2.500h8.500v6H11M5 3h9M2.500 6.500h8v6h-8zM2 8h9" />
          </WindowButton>
          <WindowButton aria-label="닫기"><Icon d="M3 3l9 9M12 3l-9 9" /></WindowButton>
        </TitleBar>
        <Body>
          <ToolbarRow />
          <Quotes />
          <ChartPanel>
            <PriceAxis>
              <PriceList>
                {prices.map((price, i) => (
                  <PriceLabel key={i}>{price}</PriceLabel>
                ))}
              </PriceList>
              <GridButton aria-label="표">
                <svg width="10" height="10" viewBox="0 0 10 10">
                  <path d="M.5.5h9v9h-9zM.5 3h9M3.500 3v6M6.500 3v6" fill="none" stroke="#777" />
                </svg>
              </GridButton>
              <PriceTag $left={3}>
                <TagValue>1,384</TagValue>:.52%
              </PriceTag>
              <CursorTag $left={1}>
                1,341<CursorRate>15,23%</CursorRate>
              </CursorTag>
            </PriceAxis>
            <Plot>
              <Chart />
              <Handle />
              <ChartCaption>이스타코 매물대 수(13)</ChartCaption>
              <Note $left="46.7%" $top="4.500%" $color="#ee0000">최고 1,500 (-7,73%, 11:08)</Note>
              <Note $left="16px" $top="94%" $height="7px" $color="#0000ee">최저 1,198 (15,53%, 09:02)</Note>
              <Note $right="0" $top="95.500%" $color="#00ee00">당일시가 1,200 (-24,15%)</Note>
            </Plot>
            <RateAxis>
              <RateTicks viewBox="0 77 7 960" preserveAspectRatio="none">
                {Array.from({ length: 52 }, (_, i) => (
                  <path key={i} d={`M0 ${112.5 + i * 18.4}h${i % 5 === 0 ? 6 : 2}`} stroke="#888" />
                ))}
              </RateTicks>
              <RateHead $color="#ee1100">LC:15,53</RateHead>
              <RateHead $color="#1059cc">HC:-7,73</RateHead>
              <RateList>
                {rates.map((rate, i) => (
                  <RateLabel key={i}>{rate}</RateLabel>
                ))}
              </RateList>
              <PriceTag $left={4}>
                <TagValue>1,384</TagValue>-12,52
              </PriceTag>
              <CursorTag $left={3}>
                1,341<CursorRate>-15,23%</CursorRate>
              </CursorTag>
            </RateAxis>
          </ChartPanel>
          <TimeAxis>
            <TimeCells>
              {times.map(([x, label], i) => (
                <TimeCell key={x} $span={(i + 1 < times.length ? times[i + 1][0] : 1866) - x} $bold={i === 0}>
                  {label}
                </TimeCell>
              ))}
            </TimeCells>
            <LastTime>15:16:1</LastTime>
            <TimeCursor>2025/05/02(금) 12:51:20</TimeCursor>
          </TimeAxis>
          <Footer>
            <ScrollButton aria-label="왼쪽으로"><Icon size={11} fill="#000" d="M9 3v9L5 7.500z" /></ScrollButton>
            <ScrollTrack>
              <ScrollSpace />
              <ScrollThumb />
            </ScrollTrack>
            <ScrollButton aria-label="재생"><Icon size={11} fill="#000" d="M6 3v9l4-4.500z" /></ScrollButton>
            <ScrollButton aria-label="뒤로"><Icon size={11} fill="#000" d="M7 3v9L2 7.500zM13 3v9L8 7.500z" /></ScrollButton>
            <ScrollButton aria-label="정지"><Icon size={11} fill="#000" d="M3 3h9v9H3z" /></ScrollButton>
            <ScrollButton aria-label="앞으로"><Icon size={11} fill="#000" d="M2 3v9l5-4.500zM8 3v9l5-4.500z" /></ScrollButton>
            <SpeedBox>
              <SpeedSlider
                type="range"
                aria-label="재생 속도"
                min="0"
                max="10"
                value={speed}
                onChange={(e) => setSpeed(Number(e.target.value))}
              />
              <SpeedTicks viewBox="0 0 70 3">
                <path d="M3 1.500h66" stroke="#000" strokeWidth="3" strokeDasharray="1 5.500" />
              </SpeedTicks>
            </SpeedBox>
            <ChartTools />
          </Footer>
        </Body>
      </Frame>
    </>
  );
};

export default App;
